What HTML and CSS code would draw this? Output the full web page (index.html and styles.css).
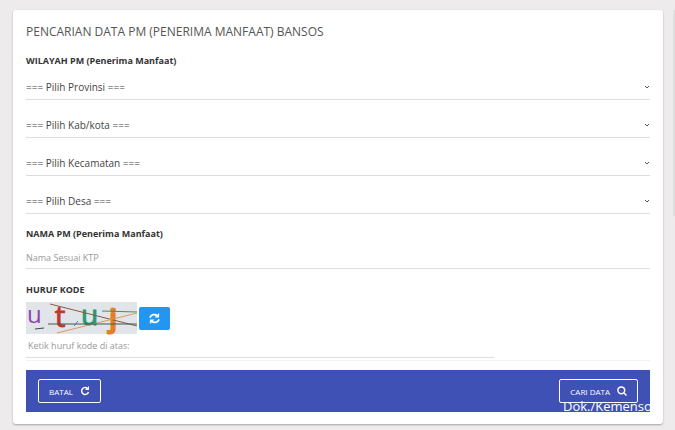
FILE: index.html
```
<!DOCTYPE html>
<html lang="id">

<head>
    <meta charset="UTF-8">
    <meta name="viewport" content="width=device-width, initial-scale=1.0">
    <title>Pencarian Data PM Bansos</title>
    <link rel="stylesheet" href="styles.css">
</head>

<body>
    <form class="card">
        <h1>PENCARIAN DATA PM (PENERIMA MANFAAT) BANSOS</h1>

        <fieldset>
            <legend>WILAYAH PM (Penerima Manfaat)</legend>
            <div class="select">
                <select aria-label="Provinsi">
                    <option>=== Pilih Provinsi ===</option>
                </select>
                <svg viewBox="0 0 6 4"><path d="M1 1l2 2 2-2" /></svg>
            </div>
            <div class="select">
                <select aria-label="Kab/kota">
                    <option>=== Pilih Kab/kota ===</option>
                </select>
                <svg viewBox="0 0 6 4"><path d="M1 1l2 2 2-2" /></svg>
            </div>
            <div class="select">
                <select aria-label="Kecamatan">
                    <option>=== Pilih Kecamatan ===</option>
                </select>
                <svg viewBox="0 0 6 4"><path d="M1 1l2 2 2-2" /></svg>
            </div>
            <div class="select">
                <select aria-label="Desa">
                    <option>=== Pilih Desa ===</option>
                </select>
                <svg viewBox="0 0 6 4"><path d="M1 1l2 2 2-2" /></svg>
            </div>
        </fieldset>

        <label class="heading" for="nama">NAMA PM (Penerima Manfaat)</label>
        <input class="field" id="nama" type="text" placeholder="Nama Sesuai KTP">

        <label class="heading" for="kode">HURUF KODE</label>
        <div class="captcha">
            <svg class="code" viewBox="0 0 111 32">
                <text x="1" y="21" fill="#8e44ad" font-size="24">u</text>
                <text x="29" y="25" fill="#c0392b" stroke="#c0392b" font-size="29">t</text>
                <text x="55" y="23" fill="#239b7e" stroke="#239b7e" font-size="28">u</text>
                <text x="83" y="26" fill="#e67e22" stroke="#e67e22" font-size="27" font-weight="bold">j</text>
                <path d="M24 2L111 24" stroke="#8a5a3c" />
                <path d="M31 31L111 11" stroke="#d99a5b" />
                <path d="M22 22H111" stroke="#3c5a50" />
                <path d="M76 9L111 10" stroke="#4c8a60" />
                <path d="M9 27l9-1" stroke="#444" />
                <path d="M48 24l4-5" stroke="#5b6fb0" />
            </svg>
            <button class="refresh" type="button" aria-label="Ganti kode">
                <svg viewBox="0 0 12 12">
                    <path d="M1 5a5 5 0 0 1 8-2M11 7a5 5 0 0 1-8 2" />
                    <path class="fill" d="M11 0v5H6zM1 12V7h5z" />
                </svg>
            </button>
        </div>
        <div class="answer">
            <input class="field" id="kode" type="text" placeholder="Ketik huruf kode di atas:">
        </div>

        <div class="actions">
            <button type="reset">BATAL
                <svg viewBox="0 0 10 10">
                    <path d="M7 2a3.500 3.500 0 1 0 1.500 4" />
                    <path class="fill" d="M9 0v4H5z" />
                </svg>
            </button>
            <button type="submit">CARI DATA
                <svg viewBox="0 0 10 10">
                    <circle cx="4.300" cy="4.300" r="3.400" />
                    <path d="M6.800 6.800L9.500 9.500" />
                </svg>
            </button>
            <span class="watermark">Dok./Kemensos</span>
        </div>
    </form>
</body>

</html>
```

FILE: styles.css
```
* {
    box-sizing: border-box;
}

body {
    margin: 0;
    padding: 10px 12px 6px 13px;
    background: #eeebec;
    color: #444;
    font-family: "Open Sans", "Noto Sans", sans-serif;
    font-size: 9px;
}

/* scrollbar thumb on the right edge */
body::after {
    content: "";
    position: absolute;
    top: 10px;
    right: 0;
    width: 2px;
    height: 48%;
    background: #e0e0e0;
}

.card {
    padding: 12px 13px 12px;
    background: #fff;
    border-radius: 3px;
    box-shadow: 0 1px 2px rgba(0, 0, 0, 0.3);
}

h1 {
    margin: 0 0 12px;
    color: #555;
    font-size: 12px;
    font-weight: 400;
    line-height: 20px;
}

fieldset {
    margin: 0;
    padding: 0;
    border: 0;
}

legend,
.heading {
    display: block;
    padding: 0;
    color: #333;
    font-weight: 700;
    line-height: 14px;
}

legend {
    margin-bottom: 7px;
}

select,
input,
button {
    font: inherit;
}

.select {
    position: relative;
    margin-bottom: 13px;
}

.select select {
    display: block;
    width: 100%;
    height: 25px;
    padding: 0;
    border: 0;
    border-bottom: 1px solid #ddd;
    background: none;
    color: #444;
    font-size: 10px;
    appearance: none;
}

.select svg {
    position: absolute;
    top: 10px;
    right: 0;
    width: 6px;
    height: 4px;
    pointer-events: none;
}

svg {
    fill: none;
    stroke: #555;
}

.field {
    display: block;
    width: 100%;
    height: 28px;
    margin-bottom: 14px;
    padding: 6px 0 0;
    border: 0;
    border-bottom: 1px solid #ddd;
}

.field::placeholder {
    color: #999;
}

.captcha {
    display: flex;
    align-items: center;
    gap: 2px;
    margin-top: 5px;
}

.code {
    width: 111px;
    height: 32px;
    overflow: visible;
    background: #e1e5ea;
    stroke: none;
}

.refresh {
    display: flex;
    align-items: center;
    justify-content: center;
    width: 31px;
    height: 23px;
    padding: 0;
    border: 0;
    border-radius: 2px;
    background: #2196f3;
}

.refresh svg {
    width: 11px;
    height: 11px;
    stroke: #fff;
    stroke-width: 2;
}

svg .fill {
    fill: #fff;
    stroke: none;
}

.answer {
    margin-bottom: 9px;
    border-bottom: 1px solid #f3f3f3;
}

.answer .field {
    width: 75%;
    height: 24px;
    margin-bottom: 2px;
    padding: 0 2px;
}

.actions {
    position: relative;
    display: flex;
    justify-content: space-between;
    padding: 9px 12px;
    background: #3f51b5;
}

.actions button {
    display: flex;
    align-items: center;
    gap: 7px;
    height: 24px;
    padding: 0 10px;
    border: 1px solid #fff;
    border-radius: 2px;
    background: none;
    color: #fff;
    font-size: 8px;
}

.actions svg {
    width: 10px;
    height: 10px;
    stroke: #fff;
    stroke-width: 1.500;
}

.watermark {
    position: absolute;
    top: 28px;
    left: calc(100% - 87px);
    color: #fff;
    font-size: 13px;
    line-height: 16px;
}
```
